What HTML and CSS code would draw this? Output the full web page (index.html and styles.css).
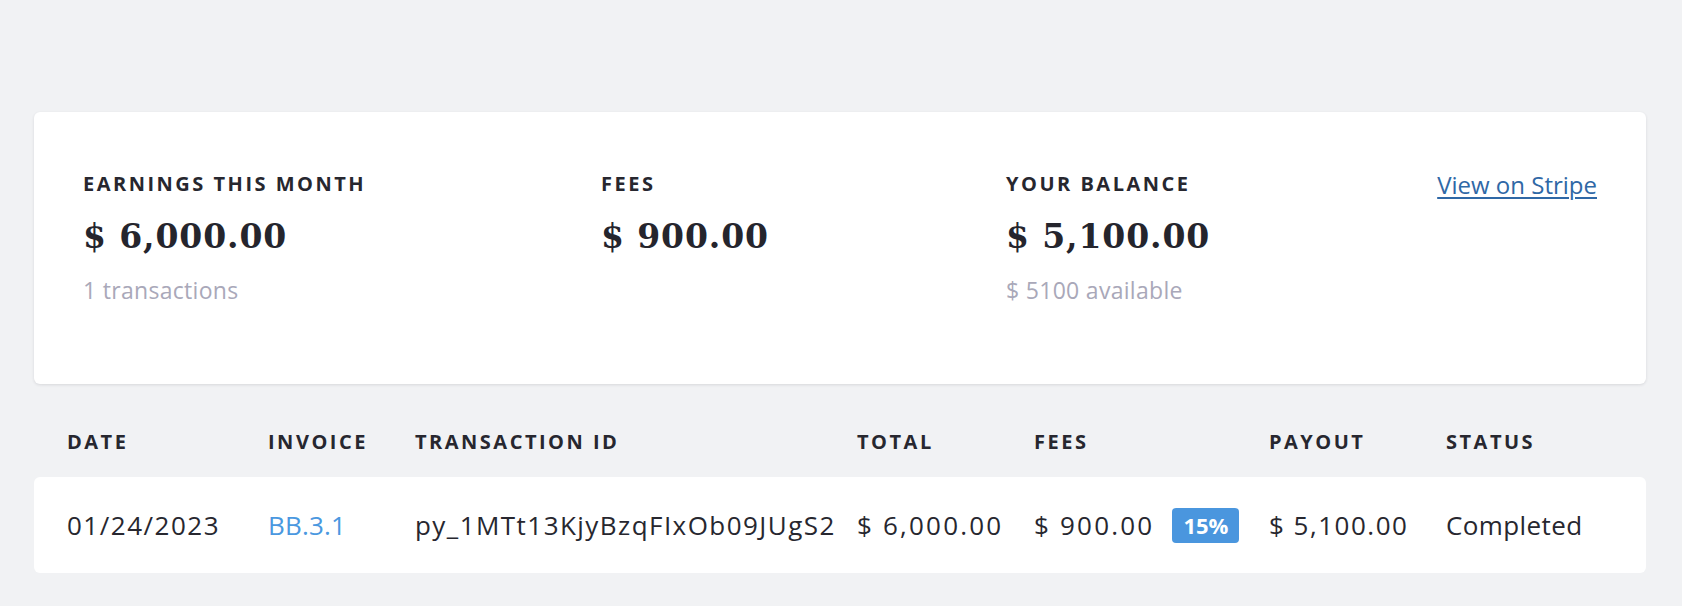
FILE: index.html
```html
<!DOCTYPE html>
<html lang="en">
<head>
<meta charset="utf-8">
<title>Earnings</title>
<link rel="stylesheet" href="styles.css">
</head>
<body>
<main class="page">
  <section class="summary">
    <div class="stat">
      <div class="label">Earnings this month</div>
      <div class="amount">$ 6,000.00</div>
      <div class="sub">1 transactions</div>
    </div>
    <div class="stat">
      <div class="label">Fees</div>
      <div class="amount">$ 900.00</div>
    </div>
    <div class="stat">
      <div class="label">Your balance</div>
      <div class="amount">$ 5,100.00</div>
      <div class="sub">$ 5100 available</div>
    </div>
    <a class="stripe-link" href="#">View on Stripe</a>
  </section>

  <div class="table-head cols">
    <div class="label">Date</div>
    <div class="label">Invoice</div>
    <div class="label">Transaction ID</div>
    <div class="label">Total</div>
    <div class="label">Fees</div>
    <div class="label">Payout</div>
    <div class="label">Status</div>
  </div>

  <div class="table-row cols">
    <div class="cell">01/24/2023</div>
    <div class="cell"><a class="invoice" href="#">BB.3.1</a></div>
    <div class="cell txid">py_1MTt13KjyBzqFIxOb09JUgS2</div>
    <div class="cell money">$ 6,000.00</div>
    <div class="cell money fees"><span>$ 900.00</span><span class="badge">15%</span></div>
    <div class="cell">$ 5,100.00</div>
    <div class="cell status">Completed</div>
  </div>
</main>
</body>
</html>
```

FILE: styles.css
```css
html, body {
  margin: 0;
  padding: 0;
  background: #f1f2f4;
}

body {
  font-family: "Open Sans", "Liberation Sans", sans-serif;
  color: #27272f;
}

.page {
  padding: 112px 36px 0 34px;
}

.summary {
  background: #ffffff;
  border-radius: 6px;
  box-shadow: 0 1px 3px rgba(30, 30, 50, 0.12);
  padding: 58px 49px 78px 49px;
  display: grid;
  grid-template-columns: 518px 405px 1fr auto;
  align-items: start;
}

.label {
  font-size: 20px;
  font-weight: 700;
  letter-spacing: 2.5px;
  text-transform: uppercase;
  color: #27272f;
  white-space: nowrap;
}

.amount {
  margin-top: 21px;
  font-family: "DejaVu Serif", "Liberation Serif", serif;
  font-weight: 700;
  font-size: 33px;
  letter-spacing: 0.9px;
  color: #25252d;
  font-variant-numeric: oldstyle-nums;
  line-height: 37px;
}

.sub {
  margin-top: 19px;
  font-size: 23px;
  letter-spacing: 0.3px;
  color: #a9a8b9;
}

.stripe-link {
  font-size: 24px;
  color: #2f68a6;
  text-decoration: underline;
  text-underline-offset: 3px;
  text-decoration-thickness: 2px;
  margin-top: -2px;
}

.cols {
  display: grid;
  grid-template-columns: 201px 147px 442px 177px 235px 177px 1fr;
  padding-left: 33px;
  align-items: center;
}

.table-head {
  margin-top: 44px;
}

.table-row {
  margin-top: 22px;
  background: #ffffff;
  border-radius: 6px;
  height: 96px;
}

.cell {
  font-size: 26px;
  color: #27272f;
  white-space: nowrap;
  letter-spacing: 1.5px;
}

.cell.txid {
  letter-spacing: 1.45px;
}

.cell.money {
  letter-spacing: 2.2px;
}

.cell.status {
  letter-spacing: 0.4px;
}

.invoice {
  color: #4a98e0;
  text-decoration: none;
  letter-spacing: 0.2px;
}

.fees {
  display: flex;
  align-items: center;
  gap: 18px;
}

.badge {
  display: inline-block;
  background: #4a96de;
  color: #ffffff;
  font-size: 22px;
  font-weight: 700;
  line-height: 35px;
  padding: 0 11px;
  border-radius: 4px;
  letter-spacing: 0;
}
```
